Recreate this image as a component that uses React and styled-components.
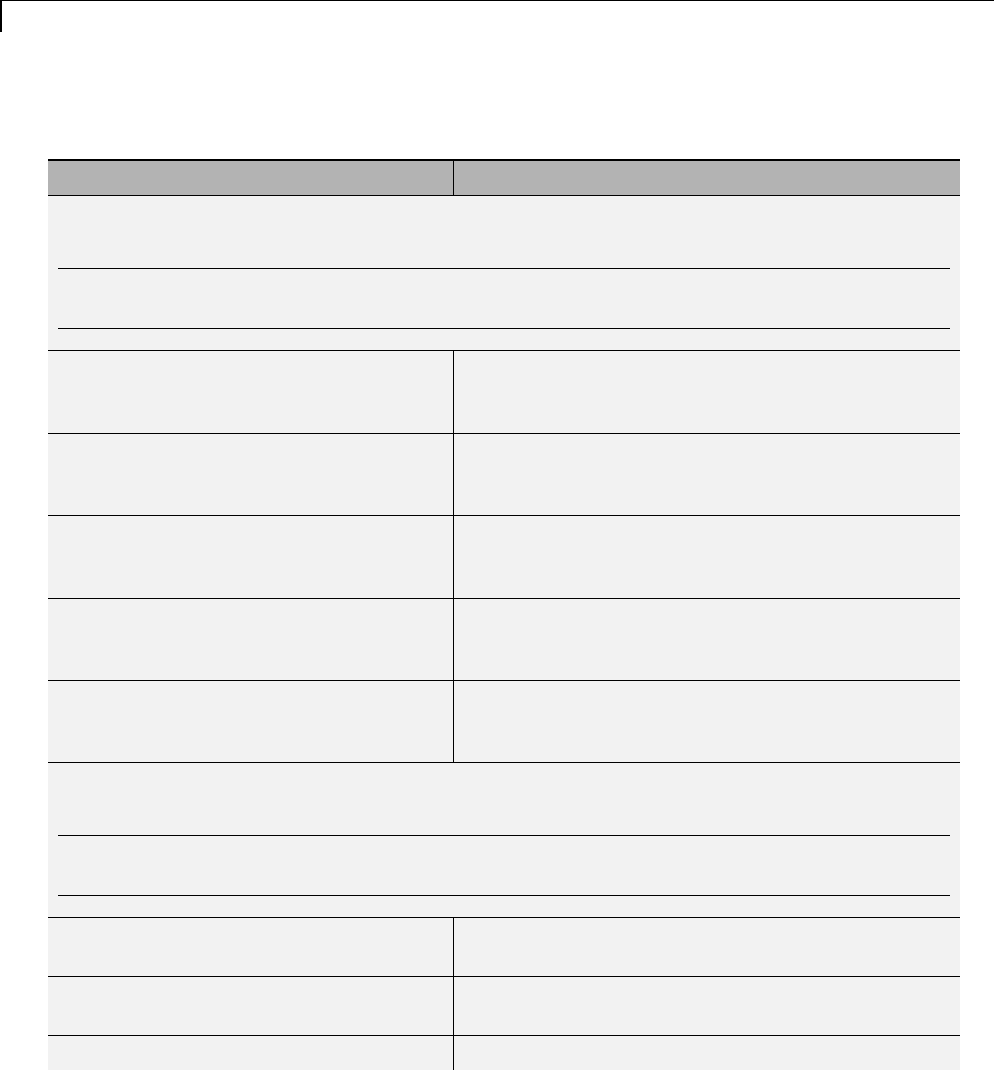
import React from "react";
import styled, { createGlobalStyle } from "styled-components";

const GlobalStyle = createGlobalStyle`
  body {
    margin: 0;
    background: #fff;
    font-family: 'Liberation Sans', Arial, sans-serif;
  }
`;

const Page = styled.div`
  width: 997px;
  min-height: 1070px;
`;

const PageHead = styled.div`
  width: 992px;
  height: 31px;
  border-top: 1px solid #000;
  border-left: 2px solid #000;
`;

const Table = styled.div`
  margin: 127px 0 0 48px;
  width: 912px;
  border-top: 2px solid #000;
`;

const Row = styled.div`
  display: grid;
  grid-template-columns: 406px 1fr;
  height: ${(p) => p.$h}px;
  background: ${(p) => (p.$head ? "#b3b3b3" : "#f2f2f2")};
  border-bottom: 1px solid #000;
  box-sizing: border-box;
`;

const Cell = styled.div`
  border-right: ${(p) => (p.$last ? "none" : "1px solid #000")};
`;

const SpanRow = styled.div`
  background: #f2f2f2;
  border-bottom: 1px solid #000;
  padding: 72px 10px 21px;
`;

const SubLine = styled.div`
  height: ${(p) => p.$h}px;
  border-bottom: 1px solid #000;
  box-sizing: border-box;
`;

const Pair = ({ h, head }) => (
  <Row $h={h} $head={head}>
    <Cell />
    <Cell $last />
  </Row>
);

const Group = () => (
  <SpanRow>
    <SubLine $h={1} />
    <SubLine $h={60} />
  </SpanRow>
);

export default function App() {
  return (
    <Page>
      <GlobalStyle />
      <PageHead />
      <Table>
        <Pair h={35} head />
        <Group />
        <Pair h={83} />
        <Pair h={82} />
        <Pair h={83} />
        <Pair h={82} />
        <Pair h={82} />
        <Group />
        <Pair h={59} />
        <Pair h={59} />
        <Pair h={35} />
      </Table>
    </Page>
  );
}
